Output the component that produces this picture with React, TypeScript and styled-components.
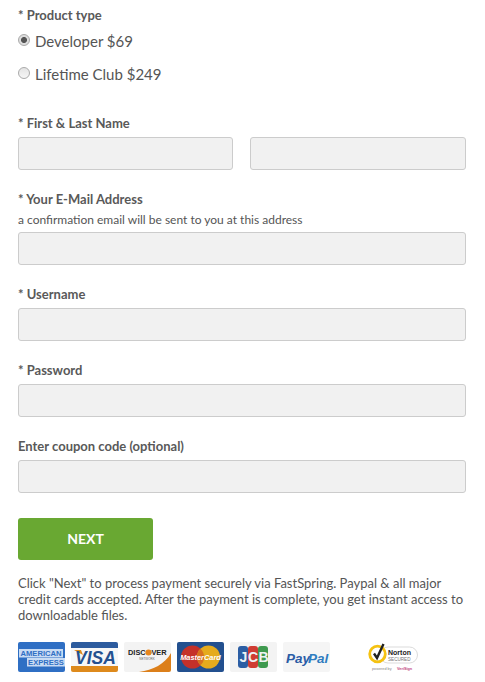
import React from "react";
import styled, { createGlobalStyle } from "styled-components";

const Global = createGlobalStyle`
  html, body { margin: 0; padding: 0; background: #fff; }
  body { font-family: "Lato", "Liberation Sans", sans-serif; color: #555; overflow: hidden; }
  * { box-sizing: border-box; }
`;

const Page = styled.form`
  width: 485px;
  height: 682px;
  padding: 7px 19px 0 18px;
  display: flex;
  flex-direction: column;
`;

const Label = styled.div<{ $top?: number }>`
  font-size: 13px;
  font-weight: 700;
  line-height: 16px;
  color: #595959;
  margin-top: ${(p) => p.$top ?? 0}px;
`;

const Hint = styled.div`
  font-size: 12px;
  line-height: 14px;
  color: #555;
  margin-top: 6px;
`;

const RadioRow = styled.label<{ $top: number }>`
  display: flex;
  align-items: center;
  gap: 5px;
  height: 20px;
  margin-top: ${(p) => p.$top}px;
  font-size: 15px;
  color: #555;
`;

const RadioDot = styled.span<{ $on?: boolean }>`
  width: 12px;
  height: 12px;
  border-radius: 50%;
  border: 1px solid #aaa;
  margin-top: -3px;
  background: ${(p) =>
    p.$on
      ? "radial-gradient(circle, #555 0 2.6px, #ddd 3.4px)"
      : "linear-gradient(#e4e4e4, #f6f6f6)"};
`;

const Input = styled.div`
  height: 33px;
  background: #f1f1f1;
  border: 1px solid #ccc;
  border-radius: 3px;
`;

const Row = styled.div<{ $top: number; $split?: boolean }>`
  display: grid;
  grid-template-columns: ${(p) => (p.$split ? "215px 216px" : "1fr")};
  gap: 17px;
  margin-top: ${(p) => p.$top}px;
`;

const NextButton = styled.button`
  width: 135px;
  height: 42px;
  margin-top: 25px;
  padding: 0 0 2px;
  border: 0;
  border-radius: 3px;
  background: #69a832;
  color: #fff;
  font: 700 14px "Lato", "Liberation Sans", sans-serif;
`;

const Note = styled.p`
  margin: 15px 0 0;
  font-size: 13px;
  line-height: 16px;
  color: #555;
  width: 450px;
`;

const Badges = styled.div`
  display: flex;
  gap: 6px;
  margin-top: 19px;
  align-items: flex-start;
`;

const CardSvg = styled.svg`
  width: 47px;
  height: 30px;
  display: block;
`;

const NortonSvg = styled.svg`
  width: 50px;
  height: 30px;
  margin-left: 32px;
  display: block;
`;

const Amex = () => (
  <CardSvg viewBox="0 0 47 30">
    <rect width="47" height="30" rx="2" fill="#2f6fc4" />
    <rect x="1" y="7" width="44" height="8.5" fill="#c9dcf4" />
    <rect x="9" y="16" width="38" height="8.5" fill="#c9dcf4" />
    <text x="23" y="14" textAnchor="middle" fontFamily="Liberation Sans" fontWeight="700" fontSize="7.6" fill="#2f6fc4">AMERICAN</text>
    <text x="28" y="23" textAnchor="middle" fontFamily="Liberation Sans" fontWeight="700" fontSize="7.6" fill="#2f6fc4">EXPRESS</text>
  </CardSvg>
);

const Visa = () => (
  <CardSvg viewBox="0 0 47 30">
    <rect width="47" height="30" rx="2" fill="#f7f7f7" />
    <path d="M0 6V2a2 2 0 0 1 2-2h43a2 2 0 0 1 2 2v4z" fill="#2c5b9e" />
    <path d="M0 24v4a2 2 0 0 0 2 2h43a2 2 0 0 0 2-2v-4z" fill="#de8a1c" />
    <path d="M3 8h7l2 5z" fill="#de8a1c" />
    <text x="24.5" y="22" textAnchor="middle" fontFamily="Liberation Sans" fontWeight="700" fontStyle="italic" fontSize="17.5" fill="#24508f">VISA</text>
  </CardSvg>
);

const Discover = () => (
  <CardSvg viewBox="0 0 47 30">
    <rect width="47" height="30" rx="2" fill="#f3f3f3" />
    <path d="M15 30c14-2 26-8 32-19v17a2 2 0 0 1-2 2z" fill="#dc7f1a" />
    <text x="4" y="13" fontFamily="Liberation Sans" fontWeight="700" fontSize="7.4" fill="#222">DISCOVER</text>
    <circle cx="24.5" cy="10.5" r="3" fill="#e8861c" />
    <text x="23" y="18" textAnchor="middle" fontFamily="Liberation Sans" fontSize="3" fill="#666">NETWORK</text>
  </CardSvg>
);

const MasterCard = () => (
  <CardSvg viewBox="0 0 47 30">
    <rect width="47" height="30" rx="2" fill="#23508f" />
    <circle cx="15.5" cy="15" r="11.5" fill="#c5312a" />
    <circle cx="31.5" cy="15" r="11.5" fill="#e5ab1d" />
    <path d="M23.5 6.7a11.5 11.5 0 0 0 0 16.6 11.5 11.5 0 0 0 0-16.6z" fill="#d8711f" />
    <text x="23.5" y="18" textAnchor="middle" fontFamily="Liberation Sans" fontWeight="700" fontStyle="italic" fontSize="7.4" fill="#fff">MasterCard</text>
  </CardSvg>
);

const Jcb = () => (
  <CardSvg viewBox="0 0 47 30">
    <rect width="47" height="30" rx="2" fill="#f3f3f3" />
    <rect x="8" y="4" width="10" height="22" rx="3" fill="#2c5ea4" />
    <rect x="18" y="4" width="10" height="22" rx="3" fill="#cf3d33" />
    <rect x="28" y="4" width="10" height="22" rx="3" fill="#3f9a4f" />
    <text x="9.5" y="20" fontFamily="Liberation Sans" fontWeight="700" fontSize="14" fill="#eef2f4" letterSpacing="0.6">JCB</text>
  </CardSvg>
);

const PayPal = () => (
  <CardSvg viewBox="0 0 47 30">
    <rect width="47" height="30" rx="2" fill="#f5f5f5" />
    <text x="3" y="20.5" fontFamily="Liberation Sans" fontWeight="700" fontStyle="italic" fontSize="13.5" fill="#2a5ca6">Pay</text>
    <text x="25" y="20.5" fontFamily="Liberation Sans" fontWeight="700" fontStyle="italic" fontSize="13.5" fill="#2f7cc0">Pal</text>
  </CardSvg>
);

const Norton = () => (
  <NortonSvg viewBox="0 0 50 30">
    <rect x="12" y="5" width="37.5" height="16" rx="8" fill="#fff" stroke="#ccc" strokeWidth=".7" />
    <circle cx="9.5" cy="12" r="7.8" fill="#fff" stroke="#f5c211" strokeWidth="2.8" />
    <path d="M6 11.5l3 4.5 6.5-14" fill="none" stroke="#222" strokeWidth="2.4" />
    <text x="20" y="13" fontFamily="Liberation Sans" fontWeight="700" fontSize="7" fill="#222">Norton</text>
    <text x="20" y="19" fontFamily="Liberation Sans" fontSize="4.6" fill="#777">SECURED</text>
    <text x="4" y="28" fontFamily="Liberation Sans" fontSize="3.8" fill="#888">powered by</text>
    <text x="29" y="28" fontFamily="Liberation Sans" fontWeight="700" fontSize="3.8" fill="#c2447e">VeriSign</text>
  </NortonSvg>
);

export default function App() {
  return (
    <>
      <Global />
      <Page>
        <Label>* Product type</Label>
        <RadioRow $top={8}><RadioDot $on />Developer $69</RadioRow>
        <RadioRow $top={13}><RadioDot />Lifetime Club $249</RadioRow>

        <Label $top={31}>* First &amp; Last Name</Label>
        <Row $top={6} $split>
          <Input />
          <Input />
        </Row>

        <Label $top={21}>* Your E-Mail Address</Label>
        <Hint>a confirmation email will be sent to you at this address</Hint>
        <Row $top={5}><Input /></Row>

        <Label $top={21}>* Username</Label>
        <Row $top={6}><Input /></Row>

        <Label $top={21}>* Password</Label>
        <Row $top={6}><Input /></Row>

        <Label $top={21}>Enter coupon code (optional)</Label>
        <Row $top={6}><Input /></Row>

        <NextButton type="button">NEXT</NextButton>
        <Note>
          Click "Next" to process payment securely via FastSpring. Paypal &amp; all major credit cards accepted. After the payment is complete, you get instant access to downloadable files.
        </Note>
        <Badges>
          <Amex />
          <Visa />
          <Discover />
          <MasterCard />
          <Jcb />
          <PayPal />
          <Norton />
        </Badges>
      </Page>
    </>
  );
}
